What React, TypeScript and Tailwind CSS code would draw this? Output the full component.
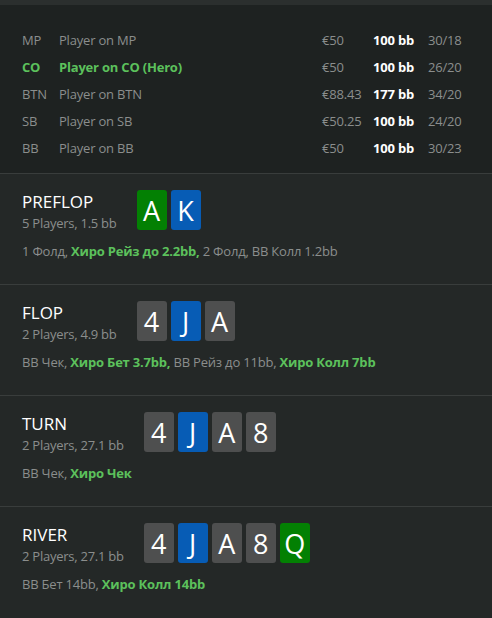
import type { ReactNode } from "react";

type Card = { r: string; c: "g" | "b" | "n" };

const players = [
  { pos: "MP", name: "Player on MP", money: "€50", bb: "100 bb", stat: "30/18" },
  { pos: "CO", name: "Player on CO (Hero)", money: "€50", bb: "100 bb", stat: "26/20", hero: true },
  { pos: "BTN", name: "Player on BTN", money: "€88.43", bb: "177 bb", stat: "34/20" },
  { pos: "SB", name: "Player on SB", money: "€50.25", bb: "100 bb", stat: "24/20" },
  { pos: "BB", name: "Player on BB", money: "€50", bb: "100 bb", stat: "30/23" },
];

const cardBg = {
  g: "bg-[#038003]",
  b: "bg-[#075cb5]",
  n: "bg-[#4e4f4f]",
};

function PlayingCard({ card }: { card: Card }) {
  return (
    <div
      className={`flex h-10 w-[30px] items-center justify-center rounded-[3px] text-[27px] leading-none text-white ${cardBg[card.c]}`}
    >
      {card.r}
    </div>
  );
}

const Hero = ({ children }: { children: ReactNode }) => (
  <span className="font-bold text-[#5cc15c]">{children}</span>
);

function Street({
  title,
  sub,
  cards,
  children,
}: {
  title: string;
  sub: string;
  cards: Card[];
  children: ReactNode;
}) {
  return (
    <div className="border-t border-[#393d3c] px-[22px] pt-4 pb-6">
      <div className="flex items-start">
        <div>
          <div className="text-[17px] leading-6 text-white">{title}</div>
          <div className="text-[13px] leading-[18px] tracking-[-0.25px] text-[#8b8e8d]">{sub}</div>
        </div>
        <div className="ml-5 flex gap-1">
          {cards.map((c, i) => (
            <PlayingCard key={i} card={c} />
          ))}
        </div>
      </div>
      <div className="mt-[10px] text-[13px] leading-[18px] tracking-[-0.2px] text-[#8b8e8d]">
        {children}
      </div>
    </div>
  );
}

const flop: Card[] = [
  { r: "4", c: "n" },
  { r: "J", c: "b" },
  { r: "A", c: "n" },
];

export default function App() {
  return (
    <div
      className="min-h-[618px] w-[492px] bg-[#242827]"
      style={{ fontFamily: '"Open Sans", "Noto Sans", sans-serif' }}
    >
      <div className="h-[5px] bg-[#2b2f2e]" />
      <div className="bg-[#1e2221] pt-[22px] pb-[11px] text-[13px] tracking-[-0.2px]">
        {players.map((p) => (
          <div key={p.pos} className="flex h-[27px] items-center pl-[22px]">
            <div className={`w-[37px] ${p.hero ? "font-bold text-[#5cc15c]" : "text-[#8b8e8d]"}`}>
              {p.pos}
            </div>
            <div className={`flex-1 ${p.hero ? "font-bold text-[#5cc15c]" : "text-[#8b8e8d]"}`}>
              {p.name}
            </div>
            <div className="w-[51px] text-[#8b8e8d]">{p.money}</div>
            <div className="w-[55px] font-bold text-white">{p.bb}</div>
            <div className="w-[64px] text-[#8b8e8d]">{p.stat}</div>
          </div>
        ))}
      </div>

      <Street
        title="PREFLOP"
        sub="5 Players, 1.5 bb"
        cards={[
          { r: "A", c: "g" },
          { r: "K", c: "b" },
        ]}
      >
        1 Фолд, <Hero>Хиро Рейз до 2.2bb,</Hero> 2 Фолд, BB Колл 1.2bb
      </Street>

      <Street title="FLOP" sub="2 Players, 4.9 bb" cards={flop}>
        BB Чек, <Hero>Хиро Бет 3.7bb,</Hero> BB Рейз до 11bb, <Hero>Хиро Колл 7bb</Hero>
      </Street>

      <Street title="TURN" sub="2 Players, 27.1 bb" cards={[...flop, { r: "8", c: "n" }]}>
        BB Чек, <Hero>Хиро Чек</Hero>
      </Street>

      <Street
        title="RIVER"
        sub="2 Players, 27.1 bb"
        cards={[...flop, { r: "8", c: "n" }, { r: "Q", c: "g" }]}
      >
        BB Бет 14bb, <Hero>Хиро Колл 14bb</Hero>
      </Street>
    </div>
  );
}
